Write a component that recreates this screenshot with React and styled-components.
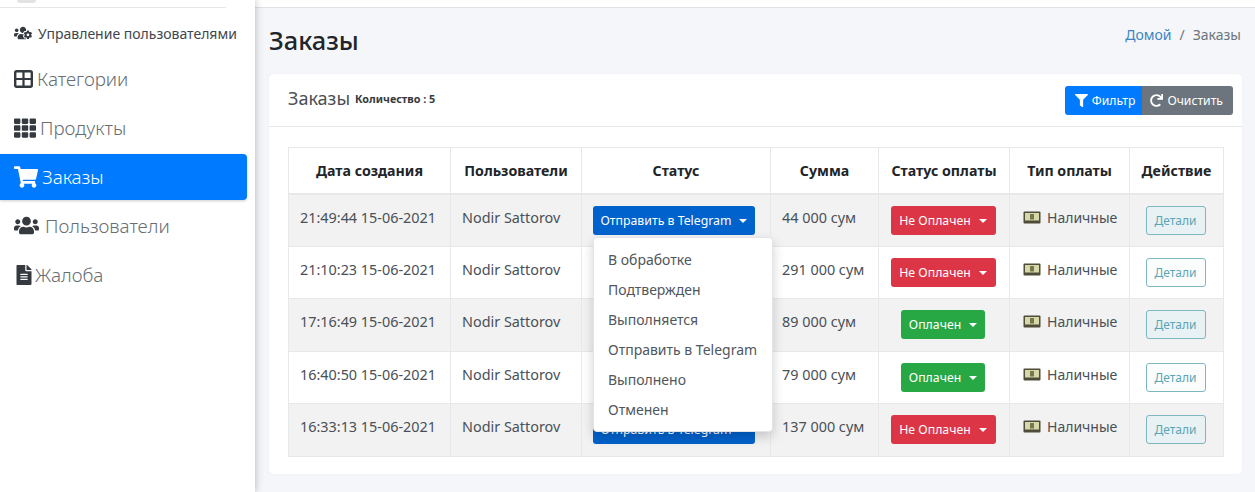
import React from "react";
import styled, { createGlobalStyle } from "styled-components";
import {
  FaUsersCog,
  FaTh,
  FaShoppingCart,
  FaUsers,
  FaFileAlt,
  FaFilter,
  FaRedo,
} from "react-icons/fa";

const GlobalStyle = createGlobalStyle`
  html, body {
    margin: 0;
    padding: 0;
    height: 492px;
    overflow: hidden;
    background: #f4f6f9;
    font-family: "Noto Sans", "Open Sans", sans-serif;
    color: #212529;
  }
  * { box-sizing: border-box; }
`;

const Page = styled.div`
  display: flex;
  width: 1255px;
  height: 492px;
  overflow: hidden;
`;

const Sidebar = styled.aside`
  width: 255px;
  flex: none;
  background: #fff;
  box-shadow: 0 0 8px rgba(0, 0, 0, 0.28);
  position: relative;
  z-index: 2;
`;

const Brand = styled.div`
  height: 8px;
  width: 226px;
  border-bottom: 1px solid #e4e6e9;
  padding-left: 17px;
  overflow: hidden;
`;

const BrandLogo = styled.div`
  width: 19px;
  height: 3px;
  border-radius: 0 0 10px 10px;
  background: #e2e2e2;
`;

const Menu = styled.nav`
  display: flex;
  flex-direction: column;
  padding: 2px 8px 0 0;
`;

const MenuItem = styled.a`
  display: flex;
  align-items: center;
  height: 46px;
  margin-bottom: ${(p) => (p.$small ? 0 : 3)}px;
  padding-left: 14px;
  padding-bottom: ${(p) => (p.$small ? 0 : 1)}px;
  gap: ${(p) => p.$gap || 3}px;
  border-radius: 0 4px 4px 0;
  font-size: ${(p) => (p.$small ? 14 : 18.8)}px;
  font-weight: ${(p) => (p.$small ? 400 : 300)};
  color: ${(p) => (p.$active ? "#fff" : p.$small ? "#3f474e" : "#666d73")};
  background: ${(p) => (p.$active ? "#007bff" : "transparent")};
  box-shadow: ${(p) => (p.$active ? "0 1px 3px rgba(0,0,0,.2)" : "none")};
  svg {
    flex: none;
    color: ${(p) => (p.$active ? "#fff" : "#343a40")};
    font-size: ${(p) => p.$icon || 19}px;
  }
`;

const Main = styled.main`
  flex: 1;
  min-width: 0;
  display: flex;
  flex-direction: column;
`;

const Topbar = styled.div`
  height: 8px;
  flex: none;
  background: #fff;
  border-bottom: 1px solid #dee2e6;
`;

const Content = styled.div`
  padding: 0 13px 0 14px;
`;

const PageHead = styled.div`
  display: flex;
  justify-content: space-between;
  height: 66px;
`;

const PageTitle = styled.h1`
  margin: 14px 0 0;
  font-size: 25.4px;
  line-height: 36px;
  font-weight: 500;
  color: #212529;
`;

const Crumbs = styled.div`
  margin: 16px 0 0;
  font-size: 14px;
  line-height: 22px;
  color: #6c757d;
  padding-right: 1px;
  a {
    color: #3c85c2;
  }
  span {
    margin: 0 8px;
  }
`;

const Card = styled.section`
  background: #fff;
  border-radius: 4px;
  box-shadow: 0 0 1px rgba(0, 0, 0, 0.14);
  height: 400px;
`;

const CardHead = styled.div`
  height: 53px;
  display: flex;
  align-items: center;
  justify-content: space-between;
  padding: 0 9px 0 19px;
  border-bottom: 1px solid #e5e7e9;
`;

const CardTitle = styled.div`
  display: flex;
  align-items: center;
  gap: 5px;
  font-size: 18px;
  color: #4a4f54;
  margin-top: -4px;
  small {
    font-size: 10.8px;
    font-weight: 700;
    color: #343a40;
  }
`;

const BtnGroup = styled.div`
  display: flex;
  margin-top: 1px;
`;

const HeadBtn = styled.button`
  display: flex;
  align-items: center;
  gap: 4px;
  height: 29px;
  border: none;
  padding: 0 ${(p) => (p.$right ? 10 : 7)}px 0 ${(p) => (p.$right ? 8 : 10)}px;
  font: 400 12.2px "Noto Sans", sans-serif;
  color: #fff;
  background: ${(p) => (p.$right ? "#6c757d" : "#007bff")};
  border-radius: ${(p) => (p.$right ? "0 3px 3px 0" : "3px 0 0 3px")};
  svg {
    font-size: 13px;
  }
`;

const CardBody = styled.div`
  padding: 20px 19px 0;
`;

const Table = styled.table`
  width: 935px;
  table-layout: fixed;
  border-collapse: collapse;
  font-size: 14.4px;
  color: #495057;
  th,
  td {
    border: 1px solid #e6e8ea;
    text-align: center;
    padding: 0;
  }
`;

const HeadCell = styled.th`
  height: 46px;
  width: ${(p) => p.$w}px;
  font-size: 14.2px;
  font-weight: 700;
  color: #212529;
  border-bottom-width: 2px !important;
`;

const Row = styled.tr`
  height: 52.6px;
  background: ${(p) => (p.$odd ? "#f2f2f2" : "#fff")};
`;

const Cell = styled.td`
  position: relative;
  vertical-align: top;
  text-align: left !important;
  padding: 13px 0 0 11px !important;
  line-height: 19px;
  white-space: nowrap;
`;

const ActionCell = styled.td`
  position: relative;
  vertical-align: top;
  padding-top: 11px !important;
  white-space: nowrap;
`;

const Caret = styled.i`
  display: inline-block;
  width: 0;
  height: 0;
  margin-left: 8px;
  vertical-align: 2px;
  border-top: 4px solid #fff;
  border-left: 4px solid transparent;
  border-right: 4px solid transparent;
`;

const DropBtn = styled.button`
  height: 29px;
  padding: 0;
  width: ${(p) => p.$w}px;
  margin-right: ${(p) => p.$shift}px;
  border: none;
  border-radius: 3px;
  font: 400 12.3px "Noto Sans", sans-serif;
  color: #fff;
  background: ${(p) => p.$bg};
`;

const Dropdown = styled.ul`
  position: absolute;
  z-index: 5;
  top: 42px;
  left: 11px;
  width: 180px;
  height: 195px;
  margin: 0;
  padding: 7px 0 0;
  list-style: none;
  background: #fff;
  border: 1px solid #e3e4e6;
  border-radius: 4px;
  box-shadow: 0 5px 12px rgba(0, 0, 0, 0.18);
  text-align: left;
`;

const DropItem = styled.li`
  height: 30px;
  line-height: 30px;
  padding-left: 14px;
  font-size: 14px;
  color: #4f565c;
`;

const Pay = styled.span`
  display: inline-flex;
  align-items: center;
  gap: 6px;
  margin-left: 2px;
  font-size: 14px;
`;

const DetailBtn = styled.button`
  width: 60px;
  height: 29px;
  margin-right: 2px;
  padding: 0;
  border: 1px solid #7fb7c1;
  border-radius: 3px;
  background: ${(p) => (p.$tint ? "#e8f2f4" : "#fbfdfd")};
  font: 400 12px "Noto Sans", sans-serif;
  color: #5aa6b6;
`;

const CashIcon = () => (
  <svg width="18" height="13" viewBox="0 0 18 13">
    <rect x="0.5" y="0.5" width="17" height="12" rx="1" fill="#4d4d3a" />
    <rect x="2" y="2" width="14" height="7.5" fill="#d6d8a8" />
    <rect x="7" y="3" width="4" height="5.5" fill="#76784f" />
  </svg>
);

const GridIcon = () => (
  <svg width="19" height="18" viewBox="0 0 19 18">
    <rect x="1.2" y="1.2" width="16.6" height="15.6" rx="1.5" fill="#fff" stroke="#343a40" strokeWidth="2.4" />
    <path d="M9.5 1v16M1 9h17" stroke="#343a40" strokeWidth="2.2" />
  </svg>
);

const menu = [
  { label: "Управление пользователями", Icon: FaUsersCog, small: true, icon: 18, gap: 6 },
  { label: "Категории", Icon: GridIcon, gap: 4 },
  { label: "Продукты", Icon: FaTh, icon: 22, gap: 4 },
  { label: "Заказы", Icon: FaShoppingCart, active: true, icon: 24, gap: 4 },
  { label: "Пользователи", Icon: FaUsers, icon: 25, gap: 6 },
  { label: "Жалоба", Icon: FaFileAlt, icon: 20, gap: 1 },
];

const statuses = ["В обработке", "Подтвержден", "Выполняется", "Отправить в Telegram", "Выполнено", "Отменен"];

const orders = [
  { date: "21:49:44 15-06-2021", sum: "44 000 сум", paid: false },
  { date: "21:10:23 15-06-2021", sum: "291 000 сум", paid: false },
  { date: "17:16:49 15-06-2021", sum: "89 000 сум", paid: true },
  { date: "16:40:50 15-06-2021", sum: "79 000 сум", paid: true },
  { date: "16:33:13 15-06-2021", sum: "137 000 сум", paid: false },
];

const columns = [
  ["Дата создания", 162],
  ["Пользователи", 131],
  ["Статус", 189],
  ["Сумма", 108],
  ["Статус оплаты", 131],
  ["Тип оплаты", 120],
  ["Действие", 94],
];

export default function App() {
  return (
    <Page>
      <GlobalStyle />
      <Sidebar>
        <Brand>
          <BrandLogo />
        </Brand>
        <Menu>
          {menu.map(({ label, Icon, small, active, icon, gap }) => (
            <MenuItem key={label} $small={small} $active={active} $icon={icon} $gap={gap}>
              <Icon />
              {label}
            </MenuItem>
          ))}
        </Menu>
      </Sidebar>
      <Main>
        <Topbar />
        <Content>
          <PageHead>
            <PageTitle>Заказы</PageTitle>
            <Crumbs>
              <a>Домой</a>
              <span>/</span>Заказы
            </Crumbs>
          </PageHead>
          <Card>
            <CardHead>
              <CardTitle>
                Заказы <small>Количество : 5</small>
              </CardTitle>
              <BtnGroup>
                <HeadBtn>
                  <FaFilter />
                  Фильтр
                </HeadBtn>
                <HeadBtn $right>
                  <FaRedo />
                  Очистить
                </HeadBtn>
              </BtnGroup>
            </CardHead>
            <CardBody>
              <Table>
                <thead>
                  <tr>
                    {columns.map(([title, w]) => (
                      <HeadCell key={title} $w={w}>
                        {title}
                      </HeadCell>
                    ))}
                  </tr>
                </thead>
                <tbody>
                  {orders.map((o, i) => (
                    <Row key={o.date} $odd={i % 2 === 0}>
                      <Cell>{o.date}</Cell>
                      <Cell>Nodir Sattorov</Cell>
                      <ActionCell>
                        <DropBtn $bg="#0062cc" $w={162} $shift={4}>
                          Отправить в Telegram
                          <Caret />
                        </DropBtn>
                        {i === 0 && (
                          <Dropdown>
                            {statuses.map((s) => (
                              <DropItem key={s}>{s}</DropItem>
                            ))}
                          </Dropdown>
                        )}
                      </ActionCell>
                      <Cell>{o.sum}</Cell>
                      <ActionCell>
                        <DropBtn $bg={o.paid ? "#28a745" : "#dc3545"} $w={o.paid ? 84 : 105} $shift={2}>
                          {o.paid ? "Оплачен" : "Не Оплачен"}
                          <Caret />
                        </DropBtn>
                      </ActionCell>
                      <Cell>
                        <Pay>
                          <CashIcon />
                          Наличные
                        </Pay>
                      </Cell>
                      <ActionCell>
                        <DetailBtn $tint={i % 2 === 0}>Детали</DetailBtn>
                      </ActionCell>
                    </Row>
                  ))}
                </tbody>
              </Table>
            </CardBody>
          </Card>
        </Content>
      </Main>
    </Page>
  );
}
